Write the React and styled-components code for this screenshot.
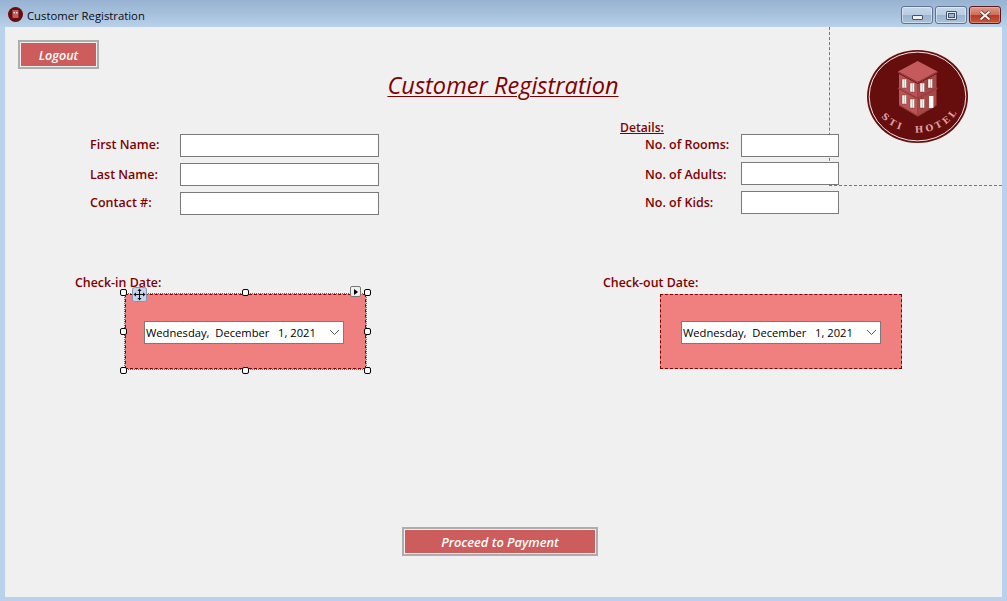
import React from "react";
import styled, { createGlobalStyle } from "styled-components";

const Global = createGlobalStyle`
  html, body { margin: 0; padding: 0; background: #b9d1ea; overflow: hidden; }
  * { box-sizing: border-box; }
`;

const Frame = styled.div`
  width: 1007px; height: 601px; display: flex; flex-direction: column;
  background: #b9d1ea; font-family: "Open Sans", "Noto Sans", sans-serif;
`;
const TitleBar = styled.div`
  height: 27px; flex: none; display: flex; align-items: flex-start; padding: 6px 6px 0 8px;
  background: linear-gradient(180deg, #98b3d1 0%, #a6c0dc 50%, #b9d1ea 100%);
`;
const AppIcon = styled.svg`width: 15px; height: 15px; flex: none; margin-top: 1px;`;
const WindowTitle = styled.span`
  margin-left: 4px; font-size: 11.3px; line-height: 20px; color: #0a0a14; flex: 1;
`;
const CaptionButtons = styled.div`display: flex; gap: 2px;`;
const CaptionButton = styled.div`
  width: 32px; height: 18px; border-radius: 3px; display: flex; align-items: center; justify-content: center;
  border: 1px solid ${p => p.$close ? "#5a1a22" : "#5f7493"};
  box-shadow: inset 0 0 0 1px ${p => p.$close ? "rgba(255,190,170,.45)" : "rgba(255,255,255,.45)"};
  background: ${p => p.$close
    ? "linear-gradient(180deg,#dd9a8c 0%,#cf6e5c 48%,#b83a24 52%,#c45a3e 100%)"
    : "linear-gradient(180deg,#c6d7e9 0%,#b8cde2 48%,#9bb5d1 52%,#a9c2da 100%)"};
`;
const MinGlyph = styled.div`
  width: 11px; height: 5px; margin-top: 4px; background: #f0f0f0; border: 1px solid #46506a; border-radius: 1px;
`;
const MaxGlyph = styled.div`
  width: 11px; height: 9px; background: #e6ebf2; border: 1px solid #46506a; border-radius: 1px; display: flex; align-items: center; justify-content: center;
  &::after { content: ""; width: 5px; height: 3px; background: #9db4cf; border: 1px solid #46506a; }
`;
const Client = styled.main`
  position: relative; flex: 1; margin: 0 5px 4px; background: #f0f0f0; display: flex; flex-direction: column; color: #800000;
`;
const RedButton = styled.button`
  display: block; padding: 1px 0 0; width: ${p => p.$w}px; height: ${p => p.$h}px; font-family: inherit; font-style: italic; font-weight: 600;
  font-size: ${p => p.$size}px; color: #fff; background: #cd5c5c; border: 2px solid #adadad;
  box-shadow: inset 0 0 0 1px #f0f0f0;
`;
const LogoutWrap = styled.div`padding: 13px 0 0 13px;`;
const Title = styled.h1`
  margin: 1px 0 0; text-align: center; font-size: 23.6px; font-weight: 400; font-style: italic; line-height: 30px; height: 30px;
  text-decoration: underline; text-decoration-thickness: 1px; text-underline-offset: 2px; color: #800000; padding-right: 1px;
`;
const FormArea = styled.section`display: flex; margin-top: 20px; height: 95px;`;
const LeftFields = styled.div`margin: 14px 0 0 85px; display: flex; flex-direction: column; gap: 6px; width: 530px;`;
const RightFields = styled.div`display: flex; flex-direction: column;`;
const Details = styled.div`
  height: 14px; font-size: 12.2px; line-height: 16px; font-weight: 600; text-decoration: underline; color: #800000;
`;
const Row = styled.div`
  display: flex; align-items: center; height: 23px;
  margin-left: ${p => p.$indent || 0}px; margin-top: ${p => p.$top || 0}px;
`;
const Label = styled.label`
  width: ${p => p.$w}px; flex: none; font-size: 12.5px; font-weight: 600;
  margin-top: ${p => p.$down ? 2 : 0}px; margin-bottom: ${p => p.$up ? 2 : 0}px;
`;
const Input = styled.div`
  width: ${p => p.$w}px; height: 23px; background: #fff; border: 1px solid #7a7a7a; position: relative; z-index: 1;
`;
const DateArea = styled.section`display: flex; margin-top: 61px;`;
const DateCol = styled.div`
  margin-left: ${p => p.$left || 0}px; width: ${p => p.$width}px; display: flex; flex-direction: column; flex: none;
`;
const DateLabel = styled.div`
  height: 18px; font-size: 12.4px; line-height: 14px; font-weight: 600; color: #800000;
`;
const Panel = styled.div`
  position: relative; margin-left: ${p => p.$left}px; width: ${p => p.$w}px; height: 75px; background: #f08080; border: 1px dashed #800000;
  display: flex; align-items: center; padding: 1px 0 0 ${p => p.$pad}px;
`;
const DatePicker = styled.div`
  width: 200px; height: 23px; background: #fff; border: 1px solid #7a7a7a; display: flex; align-items: center; justify-content: space-between;
  padding: 0 3px 0 1px; font-size: 11.2px; color: #000; white-space: pre;
`;
const Chevron = styled.svg`width: 11px; height: 7px; flex: none;`;
const Selection = styled.div`
  position: absolute; inset: -2px; border: 1px dotted #666; pointer-events: none;
`;
const Handle = styled.div`
  position: absolute; width: 7px; height: 7px; background: #fff; border: 1px solid #000; border-radius: 2px;
  left: ${p => p.$x}px; top: ${p => p.$y}px;
`;
const MoveGlyph = styled.svg`position: absolute; left: 6px; top: -8px; width: 15px; height: 15px;`;
const SmartTag = styled.div`
  position: absolute; left: 224px; top: -9px; width: 11px; height: 11px; background: #f0f0f0; border: 1px solid #777; border-radius: 2px;
  display: flex; align-items: center; justify-content: center;
  &::after { content: ""; border-left: 4px solid #000; border-top: 3.5px solid transparent; border-bottom: 3.5px solid transparent; margin-left: 1px; }
`;
const LogoBox = styled.div`
  position: absolute; left: 824px; top: 0; width: 173px; height: 159px;
  border-left: 1px dashed #777; border-bottom: 1px dashed #777; pointer-events: none;
`;
const LogoSvg = styled.svg`position: absolute; left: 37px; top: 23px; width: 101px; height: 93px;`;
const Footer = styled.div`margin: 158px 0 0 397px;`;

const Arrow = () => (
  <Chevron viewBox="0 0 11 7"><path d="M1 1l4.5 4.5L10 1" fill="none" stroke="#555" strokeWidth="1" /></Chevron>
);

const Window = ({ x, y }) => (
  <g>
    <rect x={x} y={y} width="4.6" height="9" fill="#fbf8f2" stroke="#4d2020" strokeWidth=".35" />
    <line x1={x + 2.3} x2={x + 2.3} y1={y} y2={y + 9} stroke="#7a5a5a" strokeWidth=".4" />
  </g>
);

const Logo = () => (
  <LogoSvg viewBox="867 50 101 93">
    <ellipse cx="917.5" cy="96.5" rx="50.5" ry="46.5" fill="#660e0e" />
    <ellipse cx="917.5" cy="96.5" rx="48.3" ry="44.4" fill="none" stroke="#f3e6e6" strokeWidth="1" />
    <polygon points="899,74 917.7,84 917.7,116 899,105" fill="#bb5555" />
    <polygon points="936.5,74 917.7,84 917.7,116 936.5,105" fill="#a94848" />
    <polygon points="917.7,61 937.5,71.5 917.7,82 898,71.5" fill="#c45a5c" />
    <polyline points="898,72 917.7,82.5 937.5,72" fill="none" stroke="#96403f" strokeWidth="1.2" />
    <polyline points="898,88 917.7,98.5 937.5,88" fill="none" stroke="#96403f" strokeWidth="1.6" />
    <polyline points="899,105 917.7,116 936.5,105" fill="none" stroke="#96403f" strokeWidth="1.2" />
    <Window x={902} y={79} />
    <Window x={910} y={83} />
    <Window x={920} y={83} />
    <Window x={928} y={79} />
    <Window x={902} y={95} />
    <Window x={910} y={99} />
    <Window x={920} y={99} />
    <rect x="929" y="96" width="4.4" height="12" fill="#f8f8f8" />
    <path id="logoArc" d="M 873.5 96.5 A 44 36 0 0 0 961.5 96.5" fill="none" />
    <text fontFamily="'DejaVu Serif', 'Liberation Serif', serif" fontWeight="700" fontSize="9" fill="#e0a0a0" letterSpacing="2.9">
      <textPath href="#logoArc" startOffset="53%" textAnchor="middle">{"STI\u00A0\u00A0HOTEL"}</textPath>
    </text>
  </LogoSvg>
);

export default function App() {
  return (
    <>
      <Global />
      <Frame>
        <TitleBar>
          <AppIcon viewBox="0 0 15 15">
            <circle cx="7.5" cy="7.5" r="7.5" fill="#660e0e" />
            <rect x="4.5" y="3" width="6" height="8" fill="#c45a5c" />
            <rect x="5.5" y="5" width="1.5" height="1.5" fill="#f3e6e6" />
            <rect x="8" y="5" width="1.5" height="1.5" fill="#f3e6e6" />
          </AppIcon>
          <WindowTitle>Customer Registration</WindowTitle>
          <CaptionButtons>
            <CaptionButton><MinGlyph /></CaptionButton>
            <CaptionButton><MaxGlyph /></CaptionButton>
            <CaptionButton $close>
              <svg width="14" height="11" viewBox="0 0 14 11">
                <path d="M2.5 1.5L11.5 9.5M11.5 1.5L2.5 9.5" stroke="#4a2a2a" strokeWidth="3.4" />
                <path d="M2.5 1.5L11.5 9.5M11.5 1.5L2.5 9.5" stroke="#f4f0f0" strokeWidth="2" />
              </svg>
            </CaptionButton>
          </CaptionButtons>
        </TitleBar>
        <Client>
          <LogoBox><Logo /></LogoBox>
          <LogoutWrap>
            <RedButton $w={81} $h={29} $size={12.6}>Logout</RedButton>
          </LogoutWrap>
          <Title>Customer Registration</Title>
          <FormArea>
            <LeftFields>
              <Row><Label $w={90} $up>First Name:</Label><Input $w={199} /></Row>
              <Row><Label $w={90}>Last Name:</Label><Input $w={199} /></Row>
              <Row><Label $w={90} $up>Contact #:</Label><Input $w={199} /></Row>
            </LeftFields>
            <RightFields>
              <Details>Details:</Details>
              <Row $indent={25}><Label $w={96} $up>No. of Rooms:</Label><Input $w={98} /></Row>
              <Row $indent={25} $top={5}><Label $w={96} $down>No. of Adults:</Label><Input $w={98} /></Row>
              <Row $indent={25} $top={6}><Label $w={96}>No. of Kids:</Label><Input $w={98} /></Row>
            </RightFields>
          </FormArea>
          <DateArea>
            <DateCol $left={70} $width={528}>
              <DateLabel>Check-in Date:</DateLabel>
              <Panel $left={50} $pad={18} $w={241}>
                <DatePicker>Wednesday,  December   1, 2021<Arrow /></DatePicker>
                <Selection />
                <MoveGlyph viewBox="0 0 15 15">
                  <rect x=".5" y=".5" width="14" height="14" rx="2" fill="#c4d4ea" stroke="#8296b4" />
                  <path d="M7.5 2.5v10M2.5 7.5h10" stroke="#111" />
                  <path d="M7.5 1.5l2 2.5h-4zM7.5 13.5l2-2.5h-4zM1.5 7.5l2.5-2v4zM13.5 7.5l-2.5-2v4z" fill="#111" />
                </MoveGlyph>
                <SmartTag />
                <Handle $x={-6} $y={-6} />
                <Handle $x={116} $y={-6} />
                <Handle $x={238} $y={-6} />
                <Handle $x={-6} $y={33} />
                <Handle $x={238} $y={33} />
                <Handle $x={-6} $y={72} />
                <Handle $x={116} $y={72} />
                <Handle $x={238} $y={72} />
              </Panel>
            </DateCol>
            <DateCol $width={320}>
              <DateLabel>Check-out Date:</DateLabel>
              <Panel $left={57} $pad={20} $w={242}>
                <DatePicker>Wednesday,  December   1, 2021<Arrow /></DatePicker>
              </Panel>
            </DateCol>
          </DateArea>
          <Footer>
            <RedButton $w={196} $h={29} $size={12.8}>Proceed to Payment</RedButton>
          </Footer>
        </Client>
      </Frame>
    </>
  );
}
